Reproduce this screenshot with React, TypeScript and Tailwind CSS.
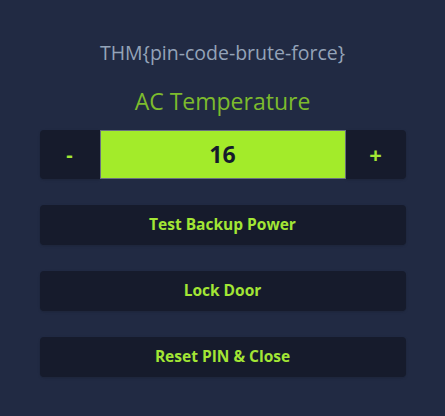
import { useState } from 'react';

export default function App() {
  const [temp, setTemp] = useState(16);

  const actions = ['Test Backup Power', 'Lock Door', 'Reset PIN & Close'];

  return (
    <div
      className="min-h-[416px] w-full bg-[#212a43] flex flex-col items-center pt-[39px]"
      style={{ fontFamily: '"Open Sans", "Noto Sans", sans-serif' }}
    >
      <h1 className="text-[19.5px] leading-[28px] text-[#94a3b8]">THM{'{'}pin-code-brute-force{'}'}</h1>

      <h2 className="mt-[19px] text-[23px] leading-[30px] text-[#7dbb2d]">AC Temperature</h2>

      {/* temperature control */}
      <div className="mt-[14px] w-[366px] flex h-[49px]">
        <button
          onClick={() => setTemp(t => t - 1)}
          className="w-[60px] bg-[#161b2c] rounded-l text-[#a3e635] font-bold text-[20px] shadow"
        >
          -
        </button>
        <div className="flex-1 bg-[#a3eb2a] border border-[#6b7280] flex items-center justify-center text-[#161b2c] font-bold text-[23px]">
          {temp}
        </div>
        <button
          onClick={() => setTemp(t => t + 1)}
          className="w-[60px] bg-[#161b2c] rounded-r text-[#a3e635] font-bold text-[22px] shadow"
        >
          +
        </button>
      </div>

      {/* actions */}
      <div className="mt-[26px] w-[366px] flex flex-col gap-[26px]">
        {actions.map(label => (
          <button
            key={label}
            className="h-[40px] w-full bg-[#161b2c] rounded text-[#a3e635] font-bold text-[15.5px] leading-none pb-[1px] shadow"
          >
            {label}
          </button>
        ))}
      </div>
    </div>
  );
}
